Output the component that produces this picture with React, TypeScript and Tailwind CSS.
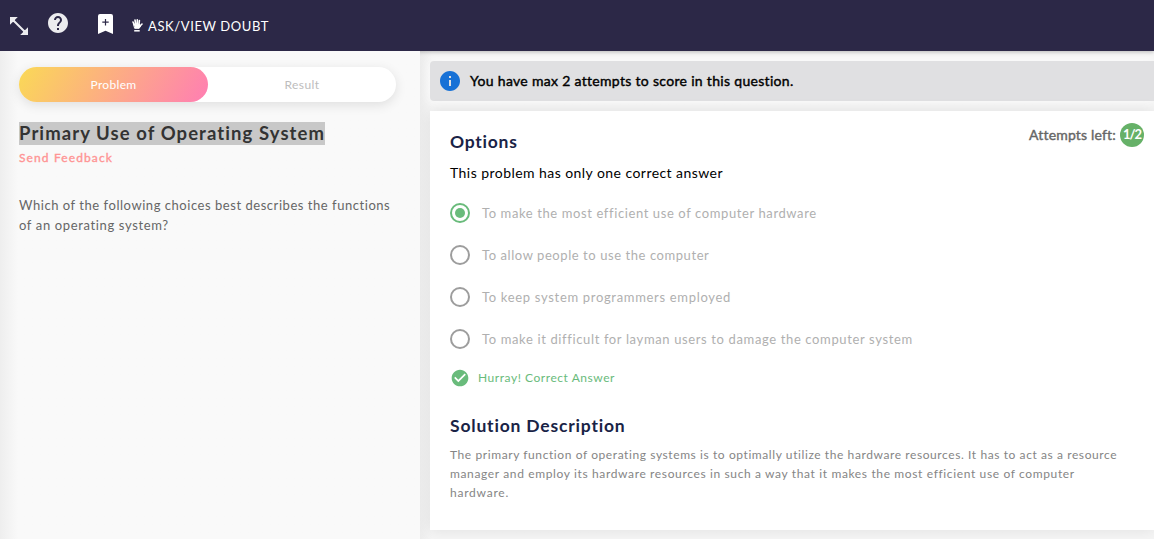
import { MdHelp, MdCheckCircle, MdInfo } from 'react-icons/md';

const options = [
  { text: 'To make the most efficient use of computer hardware', checked: true, tracking: 'tracking-[0.605px]' },
  { text: 'To allow people to use the computer', checked: false, tracking: 'tracking-[0.57px]' },
  { text: 'To keep system programmers employed', checked: false, tracking: 'tracking-[0.68px]' },
  { text: 'To make it difficult for layman users to damage the computer system', checked: false, tracking: 'tracking-[0.632px]' },
];

function TopBar() {
  return (
    <header className="relative z-10 flex h-[51px] shrink-0 items-start bg-[#2c2847] text-white shadow-[0_1px_4px_rgba(0,0,0,0.25)]">
      <svg className="mt-[17px] ml-[10px] h-[18px] w-[18px]" viewBox="0 0 18 18" fill="#ececef">
        <path d="M0 0H7.8L5 2.8L4.9 3.5L14.5 13.1L15.2 13L18 10.2V18H10.2L13 15.2L13.1 14.5L3.5 4.9L2.8 5L0 7.8Z" />
      </svg>
      <MdHelp className="mt-[11px] ml-[18px] h-6 w-6 text-[#ececef]" />
      <svg className="mt-[14px] ml-[28px] h-5 w-[15px]" viewBox="0 0 15 20">
        <path fill="#fff" d="M2 0H13Q15 0 15 2V20L7.5 16.8L0 20V2Q0 0 2 0Z" />
        <path stroke="#2c2847" strokeWidth="1.2" d="M7.5 5V11.4M4.3 8.2H10.7" />
      </svg>
      <svg className="mt-[19px] ml-[19px] h-[13px] w-[11px]" viewBox="0 0 11 13" fill="none" stroke="#fff" strokeLinecap="round" strokeLinejoin="round">
        <path strokeWidth="1.6" d="M1 3L2.3 6M3 1L3.7 5M5.3 .8V5M7.4 1.5L7 5.3M10 5L7.8 7.3" />
        <path fill="#fff" strokeWidth="1" d="M2 5.2H7.4L8.6 7L7.2 9.3H3Z" />
        <path strokeWidth="1.5" strokeLinecap="butt" d="M2.2 11.8H7.7" />
      </svg>
      <span className="mt-[18px] ml-[5px] text-[13px] leading-4 tracking-[0.593px]">ASK/VIEW DOUBT</span>
    </header>
  );
}

function ProblemPanel() {
  return (
    <section className="relative z-20 w-[420px] shrink-0 bg-[#f9f9f9] bg-linear-to-r from-[#eeeeee] to-[#f9f9f9] to-[18px] px-[19px] pt-4">
      <div className="flex h-[35px] w-[377px] rounded-full bg-white text-[12px] leading-[35px] shadow-[0_3px_12px_rgba(0,0,0,0.11)]">
        <div className="w-[189px] rounded-full bg-linear-[120deg,#fad956,#ff7eb3] text-center tracking-[0.317px] text-white">Problem</div>
        <div className="flex-1 text-center tracking-[0.419px] text-[#bdbdbd]">Result</div>
      </div>
      <h1 className="mt-5 h-[23px] w-[306px] bg-[#c8c8c8] text-[18.5px] leading-[23px] font-bold tracking-[1.08px] whitespace-nowrap text-[#333]">
        Primary Use of Operating System
      </h1>
      <div className="mt-[5px] text-[12px] leading-4 tracking-[1.12px] text-[#ff9494] [-webkit-text-stroke:0.35px_#ff9494]">Send Feedback</div>
      <p className="mt-[29px] text-[13px] leading-5 tracking-[0.542px] whitespace-nowrap text-[#666]">
        Which of the following choices best describes the functions
        <br />
        <span className="tracking-[0.642px]">of an operating system?</span>
      </p>
    </section>
  );
}

function Radio({ checked }: { checked: boolean }) {
  return (
    <span className={`flex h-5 w-5 items-center justify-center rounded-full border-2 ${checked ? 'border-[#69bb7b]' : 'border-[#9d9d9d]'}`}>
      {checked && <span className="h-[10px] w-[10px] rounded-full bg-[#69bb7b]" />}
    </span>
  );
}

function AnswerPanel() {
  return (
    <section className="min-w-0 flex-1 bg-[#f9f9f9] bg-linear-to-r from-[#ececec] to-[#f5f5f5] to-[12px] pt-[10px] pl-[10px]">
      <div className="flex h-10 items-center rounded-l bg-[#e0e0e2] pl-2 shadow-[0_0_12px_rgba(255,255,255,0.8)]">
        <MdInfo className="h-6 w-6 text-[#1771d6]" />
        <span className="ml-2 text-[14px] leading-5 tracking-[0.31px] text-black [-webkit-text-stroke:0.4px_#000]">
          You have max 2 attempts to score in this question.
        </span>
      </div>
      <div className="mt-[10px] h-[419px] bg-white px-5 pt-5 shadow-[0_0_14px_rgba(0,0,0,0.09)]">
        <div className="flex items-start justify-between">
          <h2 className="text-[17.5px] leading-[22px] font-bold tracking-[0.76px] text-[#192346]">Options</h2>
          <div className="-mt-2 -mr-[10px] flex items-center gap-[4px]">
            <span className="text-[14px] leading-6 tracking-[0.18px] text-[#666] [-webkit-text-stroke:0.4px_#666]">Attempts left:</span>
            <span className="flex h-6 w-6 items-center justify-center rounded-full bg-[#66b168] text-[13px] font-bold tracking-[-1.1px] text-white">1/2</span>
          </div>
        </div>
        <p className="mt-[10px] text-[14px] leading-5 tracking-[0.446px] text-black">This problem has only one correct answer</p>
        <ul className="mt-5 flex flex-col gap-[22px]">
          {options.map((o) => (
            <li key={o.text} className="flex h-5 items-center gap-3">
              <Radio checked={o.checked} />
              <span className={`text-[13px] leading-5 text-[#b0b0b0] ${o.tracking}`}>{o.text}</span>
            </li>
          ))}
        </ul>
        <div className="mt-[19px] flex h-5 items-center text-[#69bb7b]">
          <MdCheckCircle className="h-5 w-5" />
          <span className="ml-2 text-[12px] leading-5 tracking-[0.547px]">Hurray! Correct Answer</span>
        </div>
        <h2 className="mt-[27px] text-[17.5px] leading-[22px] font-bold tracking-[0.81px] text-[#192346]">Solution Description</h2>
        <p className="mt-2 text-[12px] leading-[19px] whitespace-nowrap text-[#858585]">
          <span className="tracking-[0.588px]">The primary function of operating systems is to optimally utilize the hardware resources. It has to act as a resource</span>
          <br />
          <span className="tracking-[0.635px]">manager and employ its hardware resources in such a way that it makes the most efficient use of computer</span>
          <br />
          <span className="tracking-[0.764px]">hardware.</span>
        </p>
      </div>
    </section>
  );
}

export default function App() {
  return (
    <div className="flex h-[539px] w-full flex-col overflow-hidden font-['Lato',sans-serif]">
      <TopBar />
      <main className="flex min-h-0 flex-1">
        <ProblemPanel />
        <AnswerPanel />
      </main>
    </div>
  );
}
